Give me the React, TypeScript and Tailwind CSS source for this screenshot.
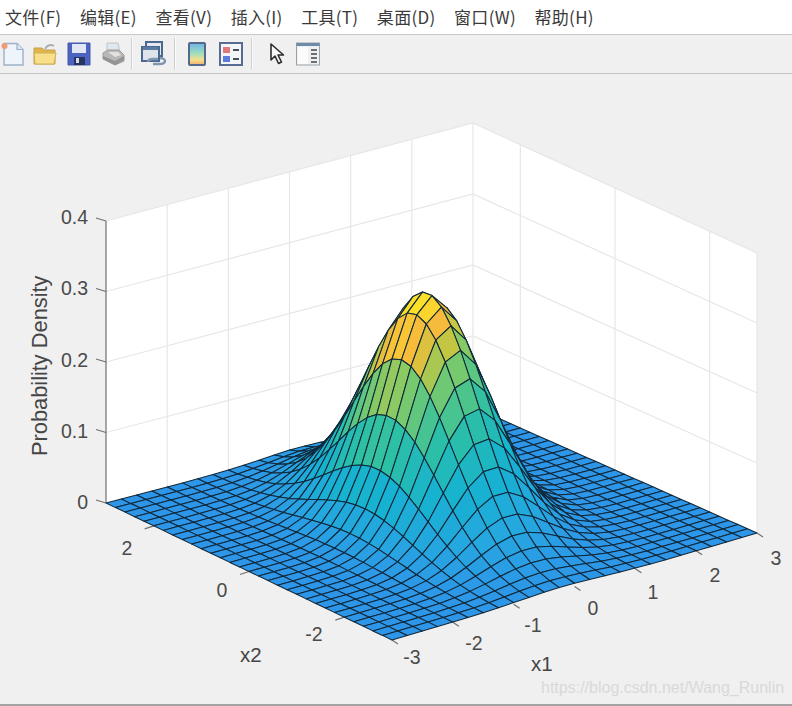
import React from 'react';

const menus = ['文件(F)', '编辑(E)', '查看(V)', '插入(I)', '工具(T)', '桌面(D)', '窗口(W)', '帮助(H)'];

// axes corners measured off the picture, the box has a little perspective
const corner = {
  left: [106, 503, 282],
  front: [392, 640, 290],
  right: [757, 533, 280],
  back: [473, 407, 284],
};

// u: x1 from -3 to 3, v: x2 from -3 to 3
const project = (x1: number, x2: number, z: number) => {
  const u = (x1 + 3) / 6;
  const v = (x2 + 3) / 6;
  const mix = (i: number) =>
    corner.front[i] * (1 - u) * (1 - v) +
    corner.right[i] * u * (1 - v) +
    corner.left[i] * (1 - u) * v +
    corner.back[i] * u * v;
  return [mix(0), mix(1) - (z / 0.4) * mix(2)];
};

// slightly correlated bell, fitted to the arches in the picture
const density = (x1: number, x2: number) => {
  const y = x2 - 0.08;
  return 0.318 * Math.exp(-1.17 * x1 * x1 - 0.45 * y * y + 0.18 * x1 * y);
};

const stops: [number, number[]][] = [
  [0, [46, 150, 232]],
  [0.12, [38, 166, 224]],
  [0.3, [22, 178, 208]],
  [0.5, [44, 192, 165]],
  [0.72, [124, 202, 106]],
  [0.82, [201, 198, 64]],
  [0.9, [246, 185, 60]],
  [1, [253, 226, 39]],
];

const colorAt = (t: number) => {
  for (let i = 1; i < stops.length; i++) {
    if (t <= stops[i][0]) {
      const [t0, a] = stops[i - 1];
      const [t1, b] = stops[i];
      const k = (t - t0) / (t1 - t0);
      return `rgb(${a.map((c, n) => Math.round(c + (b[n] - c) * k)).join(',')})`;
    }
  }
  return 'rgb(253,226,39)';
};

// painter's order, back corner (x1=3, x2=3) first
const buildFacets = () => {
  const facets: { points: string; fill: string }[] = [];
  const x1Cells = 24;
  const x2Cells = 30;
  for (let i = x1Cells - 1; i >= 0; i--) {
    for (let j = x2Cells - 1; j >= 0; j--) {
      const a = -3 + i * 0.25;
      const b = -3 + j * 0.2;
      const c = a + 0.25;
      const d = b + 0.2;
      const pts = [
        project(a, b, density(a, b)),
        project(c, b, density(c, b)),
        project(c, d, density(c, d)),
        project(a, d, density(a, d)),
      ];
      facets.push({
        points: pts.map((p) => `${p[0].toFixed(1)},${p[1].toFixed(1)}`).join(' '),
        fill: colorAt(density(c, b) / 0.318),
      });
    }
  }
  return facets;
};

const facets = buildFacets();

const zTicks = [
  { label: '0.4', z: 0.4, y: 224 },
  { label: '0.3', z: 0.3, y: 295 },
  { label: '0.2', z: 0.2, y: 367 },
  { label: '0.1', z: 0.1, y: 438 },
  { label: '0', z: 0, y: 509 },
];
const x1Labels = [
  { label: '-3', x: 412, y: 664 },
  { label: '-2', x: 474, y: 650 },
  { label: '-1', x: 533, y: 632 },
  { label: '0', x: 593, y: 615 },
  { label: '1', x: 653, y: 599 },
  { label: '2', x: 715, y: 582 },
  { label: '3', x: 776, y: 565 },
];
const x2Labels = [
  { label: '2', x: 127, y: 555 },
  { label: '0', x: 222, y: 597 },
  { label: '-2', x: 314, y: 641 },
];

const wallPoint = (x1: number, x2: number, z: number) => project(x1, x2, z).map((n) => n.toFixed(1)).join(',');

const Chart: React.FC = () => (
  <svg viewBox="0 74 792 630" className="block w-[792px] h-[630px]" style={{ fontFamily: '"Liberation Sans", Arial, sans-serif' }}>
    <polygon points="106,503 106,221 473,123 473,407" fill="#ffffff" />
    <polygon points="473,407 473,123 757,253 757,533" fill="#ffffff" />
    <g stroke="#e7e7e7" strokeWidth="1.2" fill="none">
      <polyline points="106,221 473,123 757,253 757,533" />
      <line x1="473" y1="123" x2="473" y2="407" />
      {[-2, -1, 0, 1, 2].map((v) => (
        <line key={v} x1={project(v, 3, 0)[0]} y1={project(v, 3, 0)[1]} x2={project(v, 3, 0.4)[0]} y2={project(v, 3, 0.4)[1]} />
      ))}
      {[2, 0, -2].map((v) => (
        <line key={v} x1={project(3, v, 0)[0]} y1={project(3, v, 0)[1]} x2={project(3, v, 0.4)[0]} y2={project(3, v, 0.4)[1]} />
      ))}
      {[0.1, 0.2, 0.3].map((z) => (
        <polyline key={z} points={`${wallPoint(-3, 3, z)} ${wallPoint(3, 3, z)} ${wallPoint(3, -3, z)}`} />
      ))}
    </g>

    <g stroke="#6f6f6f" strokeWidth="1.2" fill="none">
      <line x1="106" y1="221" x2="106" y2="503" />
      {zTicks.map((t) => {
        const [x, y] = project(-3, 3, t.z);
        return <line key={t.label} x1={x - 10} y1={y - 3} x2={x} y2={y} />;
      })}
      {[-3, -2, -1, 0, 1, 2, 3].map((v) => {
        const [x, y] = project(v, -3, 0);
        return <line key={v} x1={x} y1={y} x2={x + 6} y2={y + 4} />;
      })}
      {[2, 0, -2].map((v) => {
        const [x, y] = project(-3, v, 0);
        return <line key={v} x1={x} y1={y} x2={x - 9} y2={y + 3} />;
      })}
    </g>

    <g stroke="#10283a" strokeWidth="1.05" strokeLinejoin="round" className="blur-[0.4px]">
      {facets.map((f, i) => (
        <polygon key={i} points={f.points} fill={f.fill} />
      ))}
    </g>

    <g fill="#4a4a4a" fontSize="19.5">
      {zTicks.map((t) => (
        <text key={t.label} x="88" y={t.y} textAnchor="end">{t.label}</text>
      ))}
      {x1Labels.map((t) => (
        <text key={t.label} x={t.x} y={t.y} textAnchor="middle">{t.label}</text>
      ))}
      {x2Labels.map((t) => (
        <text key={t.label} x={t.x} y={t.y} textAnchor="middle">{t.label}</text>
      ))}
    </g>
    <g fill="#454545" fontSize="20.5">
      <text x="240" y="662">x2</text>
      <text x="531" y="671">x1</text>
      <text transform="translate(47 456) rotate(-90)" fontSize="21.8">Probability Density</text>
    </g>
    <text x="541" y="693" fontSize="16" fill="#d9d9d9">https://blog.csdn.net/Wang_Runlin</text>
  </svg>
);

const Separator: React.FC<{ className: string }> = ({ className }) => (
  <div className={`w-[2px] h-[32px] border-l border-[#d0d0d0] bg-[#fafafa] ${className}`} />
);

const NewIcon = () => (
  <svg viewBox="0 0 24 24" className="w-6 h-6 ml-[1px] shrink-0">
    <path d="M3 1.500h13l6 6v15.500H3z" fill="#eef4fb" stroke="#9db0c8" strokeWidth="1.4" />
    <path d="M16 1.500v6h6" fill="#dbe6f3" stroke="#9db0c8" strokeWidth="1.2" />
    <circle cx="3.500" cy="4" r="3" fill="#ee9a78" />
  </svg>
);

const OpenIcon = () => (
  <svg viewBox="0 0 24 24" className="w-6 h-6 ml-[8px] shrink-0">
    <path d="M1 6h8l2 2h11v14H1z" fill="#e3b54a" stroke="#c2a04e" />
    <path d="M1 11h22l-2 11H2z" fill="#f8e08a" stroke="#cfae58" />
    <path d="M12 7c2-4 6-5 9-3" fill="none" stroke="#a9b1b4" strokeWidth="2" />
  </svg>
);

const SaveIcon = () => (
  <svg viewBox="0 0 24 24" className="w-6 h-6 ml-[10px] shrink-0">
    <path d="M1 1h22v22H1z" fill="#4c63c4" stroke="#4559a6" />
    <rect x="5" y="2" width="14" height="9" fill="#e3e7f5" />
    <rect x="7" y="15" width="11" height="8" fill="#27345f" />
    <rect x="9" y="16" width="3" height="5" fill="#d7dbe6" />
  </svg>
);

const PrintIcon = () => (
  <svg viewBox="0 0 24 24" className="w-6 h-6 ml-[10px] shrink-0">
    <path d="M6 1h11l2 9H6z" fill="#dfe7ef" stroke="#bcc5ce" />
    <path d="M2 11l5-3h11l5 5v6l-9 4-12-6z" fill="#b8b8b8" stroke="#9c9c9c" />
    <path d="M2 14l12 5 9-5v4l-9 5-12-6z" fill="#949494" />
    <path d="M7 10h10l3 3-6 2z" fill="#e2e2e2" />
  </svg>
);

const LinkIcon = () => (
  <svg viewBox="0 0 26 26" className="w-[26px] h-[26px] ml-[8px] shrink-0">
    <rect x="5" y="1" width="16" height="14" fill="#e6eaf0" stroke="#4a6890" strokeWidth="2" />
    <rect x="1" y="6" width="17" height="14" fill="#dfe4eb" stroke="#4a6890" strokeWidth="2" />
    <rect x="2" y="6" width="15" height="3" fill="#5a7ca5" />
    <path d="M7 21c0-3 3-3 5-3h5M12 23h6c3 0 6-1 6-3s-3-3-5-3" fill="none" stroke="#8096b0" strokeWidth="2.400" />
  </svg>
);

const ColorbarIcon = () => (
  <svg viewBox="0 0 18 24" className="w-[18px] h-6 ml-[12px] shrink-0">
    <defs>
      <linearGradient id="cbar" x1="0" y1="0" x2="0" y2="1">
        <stop offset="0" stopColor="#6fb4ea" />
        <stop offset="0.45" stopColor="#9adcc0" />
        <stop offset="0.75" stopColor="#f1e08e" />
        <stop offset="1" stopColor="#f2ae6c" />
      </linearGradient>
    </defs>
    <rect x="1" y="1" width="16" height="22" rx="1" fill="url(#cbar)" stroke="#556a8a" strokeWidth="2" />
  </svg>
);

const LegendIcon = () => (
  <svg viewBox="0 0 24 24" className="w-6 h-6 ml-[13px] shrink-0">
    <rect x="1" y="1" width="22" height="22" fill="#f3f5f9" stroke="#566c92" strokeWidth="2" />
    <rect x="4" y="5" width="7" height="6" fill="#e2787a" />
    <rect x="4" y="14" width="7" height="6" fill="#5a7cdc" />
    <rect x="14" y="7" width="6" height="2" fill="#444f5c" />
    <rect x="14" y="16" width="6" height="2" fill="#444f5c" />
  </svg>
);

const CursorIcon = () => (
  <svg viewBox="0 0 16 24" className="w-4 h-6 ml-[16px] shrink-0">
    <path d="M2 2v16l4-4 3.500 7.500 3-1.500-3.500-7h5.500z" fill="#fafafa" stroke="#2d2d2d" strokeWidth="1.600" strokeLinejoin="round" />
  </svg>
);

const PanelIcon = () => (
  <svg viewBox="0 0 24 24" className="w-6 h-6 ml-[11px] shrink-0">
    <rect x="0.500" y="1" width="23" height="22" fill="#eef0f2" stroke="#9aa3ab" />
    <rect x="0.500" y="1" width="23" height="3" fill="#6d8aa6" />
    <rect x="2" y="5" width="10" height="17" fill="#fbfbfb" />
    <path d="M15 8h6M15 12h6M15 16h6M15 20h6" stroke="#6a6f73" strokeWidth="1.800" />
  </svg>
);

const App: React.FC = () => {
  return (
    <div className="w-[792px] h-[706px] flex flex-col overflow-hidden bg-[#f0f0f0]">
      <div
        className="h-[35px] bg-white flex items-center pl-[5px] gap-[18.5px] text-[17px] tracking-[0.3px] text-[#3a3a3a] border-b border-[#c9c9c9] shrink-0"
        style={{ fontFamily: '"Noto Sans CJK SC", "Noto Sans", sans-serif' }}
      >
        {menus.map((m) => (
          <span key={m} className="whitespace-nowrap">{m}</span>
        ))}
      </div>
      <div className="h-[39px] flex items-center border-b border-[#c4c4c4] shrink-0 blur-[0.6px]">
        <NewIcon />
        <OpenIcon />
        <SaveIcon />
        <PrintIcon />
        <Separator className="ml-[6px]" />
        <LinkIcon />
        <Separator className="ml-[7px]" />
        <ColorbarIcon />
        <LegendIcon />
        <Separator className="ml-[8px]" />
        <CursorIcon />
        <PanelIcon />
      </div>
      <Chart />
      <div className="h-[2px] bg-[#a3a3a3] shrink-0" />
    </div>
  );
};

export default App;
